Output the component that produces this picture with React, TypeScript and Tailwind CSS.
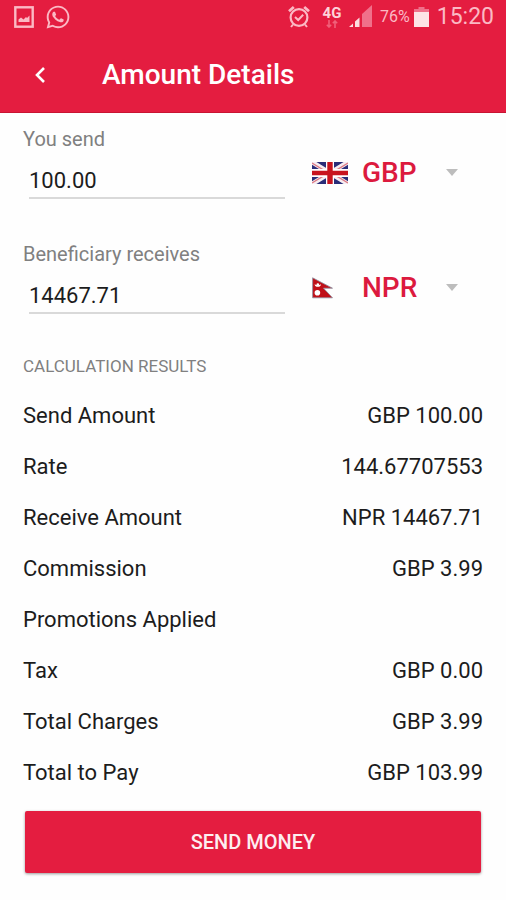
import type React from "react"
import { useState } from "react"
import { FaWhatsapp } from "react-icons/fa"

const UkFlag = () => (
  <svg viewBox="0 0 36 22" className="w-9 h-[22px]" aria-hidden="true">
    <rect width="36" height="22" fill="#2a2d78" />
    <path d="M0 0L36 22M36 0L0 22" stroke="#f6eef2" strokeWidth="4.6" />
    <path d="M0 1L17 11.4M36 21L19 10.6M36 1L19 11.4M0 21L17 10.6" stroke="#dd7a84" strokeWidth="1.4" />
    <path d="M18 0V22M0 11H36" stroke="#fff" strokeWidth="8" />
    <path d="M18 0V22" stroke="#c8141e" strokeWidth="5.4" />
    <path d="M0 11H36" stroke="#c8141e" strokeWidth="4.4" />
  </svg>
)

const NepalFlag = () => (
  <svg viewBox="0 0 36 22" className="w-9 h-[22px]" aria-hidden="true">
    <path d="M0.6 0.8L20.5 11.2H11.5L20.5 20.8H0.6Z" fill="#c01018" stroke="#8b8f9f" strokeWidth="0.8" />
    <path d="M2.6 7.2Q5.8 9.4 9 7.2Q8.6 9.8 5.8 9.8Q3 9.8 2.6 7.2Z" fill="#fff" />
    <circle cx="5.8" cy="7.6" r="1.3" fill="#fff" />
    <circle cx="5.4" cy="15.8" r="2.8" fill="#fff" />
  </svg>
)

const StatusBar = () => (
  <div className="flex h-[34px] items-center justify-between pl-[14px] pr-3 text-[#fbb9c4]">
    <div className="flex items-center gap-[11px]">
      <svg viewBox="0 0 20 22" className="h-[22px] w-5" aria-hidden="true">
        <rect x="1.3" y="1.3" width="17.4" height="19.4" fill="none" stroke="currentColor" strokeWidth="2.4" />
        <path d="M4.5 16V13.5L7 11.5L9.5 13.5L12 11L13 12L15.5 9.5V16Z" fill="currentColor" />
      </svg>
      <FaWhatsapp className="h-[26px] w-[26px]" aria-hidden="true" />
    </div>

    <div className="flex items-center">
      <svg viewBox="0 0 22 24" className="mr-3 h-6 w-[22px]" fill="none" stroke="currentColor" aria-hidden="true">
        <circle cx="11" cy="12.5" r="8.4" strokeWidth="2.2" />
        <path d="M7 12L10.2 15L15.2 9.8" strokeWidth="2" />
        <path d="M1 6.2L5.8 2M21 6.2L16.2 2" strokeWidth="2.8" />
        <path d="M5 19.5L3 22M17 19.5L19 22" strokeWidth="2" />
      </svg>
      <div className="mr-[6px] flex w-5 flex-col items-center">
        <span className="text-[15px] leading-[14px] font-bold text-[#fdd3da]">4G</span>
        <svg viewBox="0 0 12 8" className="h-2 w-3 text-[#f0617a]" fill="none" stroke="currentColor" strokeWidth="1.6" aria-hidden="true">
          <path d="M3 0V7M0.8 4.8L3 7L5.2 4.8M9 8V1M6.8 3.2L9 1L11.2 3.2" />
        </svg>
      </div>
      <svg viewBox="0 0 24 24" className="mr-2 h-6 w-6" aria-hidden="true">
        <path d="M14 22V9L24 0V22Z" fill="#f0708a" />
        <path d="M1 22L5 18.5V22Z" fill="#fcdce0" />
        <path d="M7 22V16.5L11.5 12.5V22Z" fill="#fcdce0" />
      </svg>
      <span className="mr-1 text-[16px] leading-5">76%</span>
      <svg viewBox="0 0 15 20" className="mr-2 h-5 w-[15px]" aria-hidden="true">
        <path d="M4.5 0H10.5V2H15V6H0V2H4.5Z" fill="#f0708a" />
        <rect y="5" width="15" height="15" fill="#fde3e6" />
      </svg>
      <span className="text-[23px] leading-6">15:20</span>
    </div>
  </div>
)

interface AmountFieldProps {
  id: string
  label: string
  value: string
  onChange: (value: string) => void
  currency: string
  flag: React.ReactNode
}

const AmountField: React.FC<AmountFieldProps> = ({ id, label, value, onChange, currency, flag }) => (
  <div className="flex h-[115px] items-start">
    <div className="w-[262px]">
      <label htmlFor={id} className="block text-[20px] leading-7 text-[#808080]">
        {label}
      </label>
      <div className="pl-[6px] pt-[10px]">
        <input
          id={id}
          type="text"
          inputMode="decimal"
          value={value}
          onChange={(e) => onChange(e.target.value)}
          className="block h-9 w-full border-b-2 border-[#d9d9d9] bg-transparent text-[22px] text-[#1c1c1c] outline-none"
        />
      </div>
    </div>
    <div className="ml-[27px] flex h-24 flex-1 items-center">
      {flag}
      <div className="relative ml-[14px]">
        <select
          aria-label={`${label} currency`}
          defaultValue={currency}
          className="block w-24 appearance-none bg-transparent text-[28px] leading-9 font-medium text-[#dc1a3e] outline-none"
        >
          <option>{currency}</option>
        </select>
        <svg viewBox="0 0 12 7" className="pointer-events-none absolute top-[14px] right-0 h-[7px] w-3" aria-hidden="true">
          <path d="M0 0H12L6 7Z" fill="#bdbdbd" />
        </svg>
      </div>
    </div>
  </div>
)

const results = [
  { label: "Send Amount", value: "GBP 100.00" },
  { label: "Rate", value: "144.67707553" },
  { label: "Receive Amount", value: "NPR 14467.71" },
  { label: "Commission", value: "GBP 3.99" },
  { label: "Promotions Applied", value: "" },
  { label: "Tax", value: "GBP 0.00" },
  { label: "Total Charges", value: "GBP 3.99" },
  { label: "Total to Pay", value: "GBP 103.99" },
]

export default function App() {
  const [sendAmount, setSendAmount] = useState("100.00")
  const [receiveAmount, setReceiveAmount] = useState("14467.71")

  return (
    <div className="min-h-screen bg-[#fefefe] font-['Roboto',sans-serif]">
      <header className="border-b border-[#c81432] bg-[#e41d40]">
        <StatusBar />
        <div className="flex h-[78px] items-center pt-1 pl-[30px]">
          <button type="button" aria-label="Back" className="flex h-10 w-5 items-center justify-center">
            <svg viewBox="0 0 10 16" className="h-4 w-[10px]" fill="none" stroke="#fff" strokeWidth="2.6" aria-hidden="true">
              <path d="M9 1L2 8L9 15" />
            </svg>
          </button>
          <h1 className="ml-[52px] text-[28px] leading-9 font-medium text-white">Amount Details</h1>
        </div>
      </header>

      <main className="px-[23px] pt-3">
        <AmountField
          id="send"
          label="You send"
          value={sendAmount}
          onChange={setSendAmount}
          currency="GBP"
          flag={<UkFlag />}
        />
        <AmountField
          id="receive"
          label="Beneficiary receives"
          value={receiveAmount}
          onChange={setReceiveAmount}
          currency="NPR"
          flag={<NepalFlag />}
        />

        <h2 className="text-[17px] leading-[22px] text-[#808080]">CALCULATION RESULTS</h2>
        <table className="mt-[13px] w-full text-[22px] text-[#1c1c1c]">
          <tbody>
            {results.map((row) => (
              <tr key={row.label} className="h-[51px]">
                <th scope="row" className="p-0 text-left font-normal">
                  {row.label}
                </th>
                <td className="p-0 text-right">{row.value}</td>
              </tr>
            ))}
          </tbody>
        </table>

        <div className="px-[2px] pt-[13px] pb-6">
          <button
            type="button"
            className="block h-[62px] w-full rounded-xs bg-[#e41d40] text-[20px] font-medium text-[#fdeef0] shadow-[0_1px_3px_rgba(0,0,0,0.4)]"
          >
            SEND MONEY
          </button>
        </div>
      </main>
    </div>
  )
}
